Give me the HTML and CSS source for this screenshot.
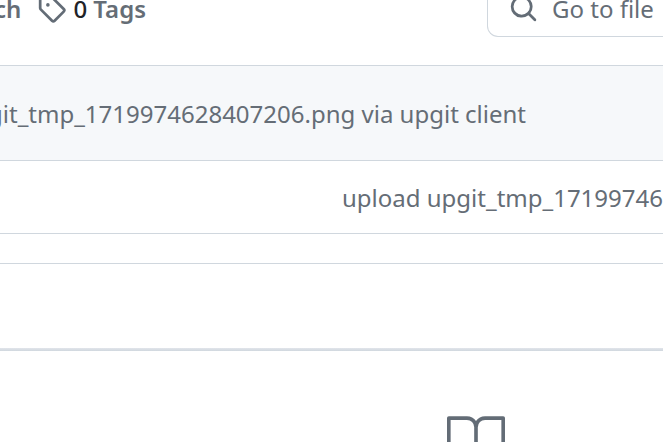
FILE: index.html
```html
<!DOCTYPE html>
<html lang="en">
<head>
<meta charset="utf-8">
<title>Repository</title>
<link rel="stylesheet" href="styles.css">
</head>
<body>
<header class="toolbar">
  <nav class="refs">
    <a class="ref" href="#branches">ch</a>
    <a class="ref" href="#tags">
      <svg class="icon" viewBox="0 0 16 16" aria-hidden="true"><path d="M1 7.775V2.75C1 1.784 1.784 1 2.75 1h5.025c.464 0 .91.184 1.238.513l6.25 6.25a1.75 1.75 0 0 1 0 2.474l-5.026 5.026a1.75 1.75 0 0 1-2.474 0l-6.25-6.25A1.752 1.752 0 0 1 1 7.775Zm1.5 0c0 .066.026.13.073.177l6.25 6.25a.25.25 0 0 0 .354 0l5.025-5.025a.25.25 0 0 0 0-.354l-6.25-6.25a.25.25 0 0 0-.177-.073H2.75a.25.25 0 0 0-.25.25ZM6 5a1 1 0 1 1 0 2 1 1 0 0 1 0-2Z"/></svg>
      <span><strong class="count">0</strong> Tags</span>
    </a>
  </nav>
  <label class="search">
    <svg class="icon" viewBox="0 0 16 16" aria-hidden="true"><path d="M10.68 11.74a6 6 0 0 1-7.922-8.982 6 6 0 0 1 8.982 7.922l3.04 3.04a.749.749 0 0 1-.326 1.275.749.749 0 0 1-.734-.215ZM11.5 7a4.499 4.499 0 1 0-8.997 0A4.499 4.499 0 0 0 11.5 7Z"/></svg>
    <input class="search-input" type="text" placeholder="Go to file" aria-label="Go to file">
  </label>
</header>
<main>
  <section class="files">
    <div class="commit">git_tmp_1719974628407206.png via upgit client</div>
    <div class="file"><a class="message" href="#commit">upload upgit_tmp_171997462</a></div>
  </section>
  <section class="readme">
    <div class="tabs"></div>
    <div class="empty">
      <svg class="book" viewBox="0 0 24 24" aria-hidden="true"><path d="M0 3.75A.75.75 0 0 1 .75 3h7.497c1.566 0 2.945.8 3.751 2.014A4.495 4.495 0 0 1 15.75 3h7.5a.75.75 0 0 1 .75.75v15.063a.752.752 0 0 1-.755.75l-7.682-.052a3 3 0 0 0-2.142.878l-.89.891a.75.75 0 0 1-1.061 0l-.902-.901a2.996 2.996 0 0 0-2.121-.879H.75a.75.75 0 0 1-.75-.75Zm12.75 15.232a4.503 4.503 0 0 1 2.823-.971l6.927.047V4.5h-6.75a3 3 0 0 0-3 3ZM11.247 7.497a3 3 0 0 0-3-2.997H1.5V18h6.947c1.018 0 2.006.346 2.803.98Z"/></svg>
    </div>
  </section>
</main>
</body>
</html>
```
FILE: styles.css
```css
* { box-sizing: border-box; }

body {
  margin: 0;
  height: 100vh;
  overflow: hidden;
  background: #fff;
  color: #656d76;
  font: 24px/32px "Segoe UI", "Noto Sans", sans-serif;
  white-space: nowrap;
}

a { color: inherit; text-decoration: none; }

svg { display: block; flex: none; fill: #636c76; }

.icon { width: 29px; height: 29px; }

.toolbar {
  display: flex;
  justify-content: space-between;
  margin-top: -24px;
  padding-bottom: 28px;
}

.refs {
  display: flex;
  align-items: center;
  gap: 16px;
  margin-left: -6px;
  padding-top: 4px;
}

.ref {
  display: flex;
  align-items: center;
  gap: 7px;
  font-weight: 600;
}

.count { color: #1f2328; font-weight: 500; }

.search {
  display: flex;
  align-items: center;
  gap: 14px;
  width: 176px;
  height: 61px;
  padding: 4px 0 0 21px;
  border: 1px solid #d0d7de;
  border-right: 0;
  border-radius: 11px 0 0 11px;
}

.search-input {
  flex: 1;
  min-width: 0;
  padding: 0;
  border: 0;
  outline: 0;
  background: none;
  color: #656d76;
  font: inherit;
}

.search-input::placeholder { color: #656d76; opacity: 1; }

.commit {
  display: flex;
  justify-content: flex-end;
  padding: 32px 137px 30px 0;
  border: solid #d0d7de;
  border-width: 1px 0;
  background: #f6f8fa;
}

.file {
  display: flex;
  padding: 21px 0 19px 342px;
  overflow: hidden;
  border-bottom: 1px solid #d0d7de;
}

.readme {
  margin-top: 29px;
  border-top: 1px solid #d0d7de;
}

.tabs {
  height: 87px;
  background: linear-gradient(#e1e5eb, #d0d7de) bottom / 100% 3px no-repeat;
}

.empty {
  display: flex;
  justify-content: center;
  padding: 58px 0 0 289px;
}

.book { width: 58px; height: 58px; }
```
